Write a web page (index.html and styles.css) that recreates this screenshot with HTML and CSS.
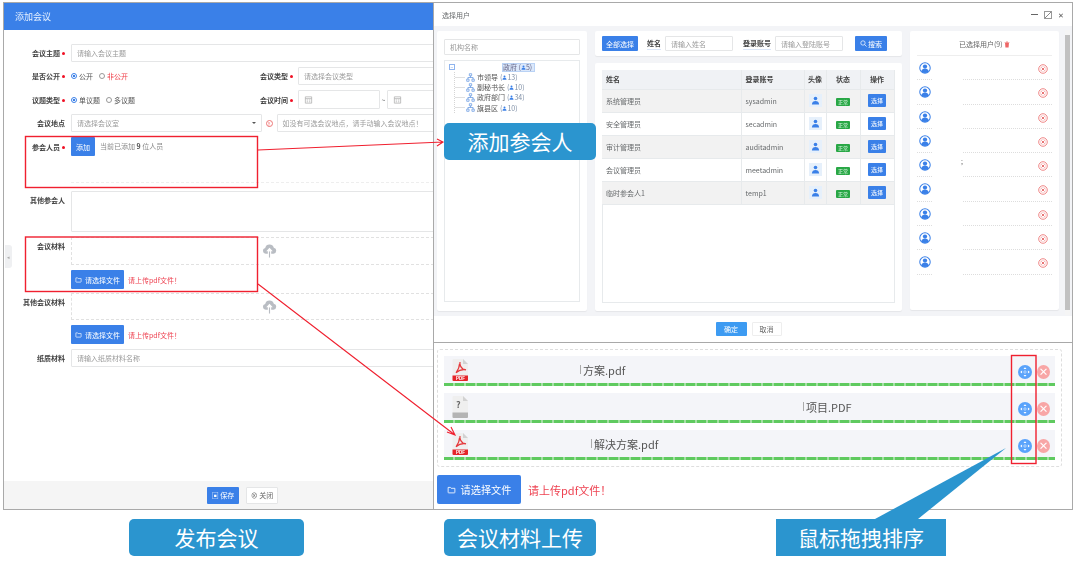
FILE: index.html
```html
<!DOCTYPE html>
<html lang="zh-CN">
<head>
<meta charset="utf-8">
<title>发布会议</title>
<link rel="stylesheet" href="styles.css">
</head>
<body>
<svg class="defs" width="0" height="0" aria-hidden="true">
  <symbol id="i-cloud" viewBox="0 0 16 16"><path fill="#b9bdc3" d="M4 11.5a3.2 3.2 0 0 1-.6-6.3A4.8 4.8 0 0 1 12.6 5a3.3 3.3 0 0 1-.3 6.5H9.8V8.800h1.700L8 5 4.500 8.800h1.700v2.700z"/><path fill="#b9bdc3" d="M7.400 9h1.200v6.500H7.400z"/></symbol>
  <symbol id="i-folder" viewBox="0 0 12 12"><path fill="none" stroke="#fff" stroke-width="1.1" d="M1.500 3.200h3l1 1.200h5v5.400a.7.7 0 0 1-.7.7H2.200a.7.7 0 0 1-.7-.7z"/></symbol>
  <symbol id="i-cal" viewBox="0 0 10 10"><path fill="none" stroke="#aaa" stroke-width=".8" d="M1.500 1.500h7v7h-7zM1.500 3.500h7M3 5h1.500M5.500 5H7M3 7h1.500M5.500 7H7"/></symbol>
  <symbol id="i-person" viewBox="0 0 10 10"><circle cx="5" cy="2.800" r="2" fill="#3a80e8"/><path fill="#3a80e8" d="M1 9.500c0-3 1.800-4 4-4s4 1 4 4z"/></symbol>
  <symbol id="i-user" viewBox="0 0 14 14"><circle cx="7" cy="7" r="6.100" fill="#fff" stroke="#3a80e8" stroke-width="1.2"/><circle cx="7" cy="5.300" r="2.500" fill="#3a80e8"/><path fill="#3a80e8" d="M2.600 11c.6-2.300 2.300-3 4.400-3s3.800.7 4.400 3a6 6 0 0 1-8.800 0z"/></symbol>
  <symbol id="i-del" viewBox="0 0 14 14"><circle cx="7" cy="7" r="6" fill="none" stroke="#ec7373" stroke-width="1.2"/><circle cx="7" cy="7" r="3.800" fill="none" stroke="#f7bcbc" stroke-width=".7"/><path stroke="#e65c5c" stroke-width="1.2" d="M5 5l4 4M9 5l-4 4"/></symbol>
  <symbol id="i-org" viewBox="0 0 10 10"><path fill="none" stroke="#6f9fe4" stroke-width=".9" d="M3.700 .8h2.600v2.300H3.700zM.8 6.800h2.600v2.400H.8zM6.600 6.800h2.600v2.400H6.600zM5 3.100v1.900M2.100 6.800V5h5.800v1.800"/></symbol>
  <symbol id="i-pdf" viewBox="0 0 17 22"><path fill="#efefef" d="M1.500 0H11l5 5v17H1.500a1 1 0 0 1-1-1V1a1 1 0 0 1 1-1z"/><path fill="#d2d2d2" d="M11 0l5 5h-5z"/><path fill="none" stroke="#e5383b" stroke-width="1.2" d="M8 3c-.5 3 .5 5 3 7l3 .8c-3-.5-7 .3-10 3 1.500-2 3.500-6 3.500-9"/><path fill="#e5252a" d="M.5 16.500H16V21a1 1 0 0 1-1 1H1.500a1 1 0 0 1-1-1z"/></symbol>
  <symbol id="i-unknown" viewBox="0 0 17 22"><path fill="#efefef" d="M1.500 0H11l5 5v17H1.500a1 1 0 0 1-1-1V1a1 1 0 0 1 1-1z"/><path fill="#d2d2d2" d="M11 0l5 5h-5z"/><path fill="#b4b4b4" d="M.5 16.500H16V21a1 1 0 0 1-1 1H1.500a1 1 0 0 1-1-1z"/></symbol>
  <symbol id="i-move" viewBox="0 0 14 14"><circle cx="7" cy="7" r="7" fill="#5aa3fb"/><circle cx="7" cy="7" r="1.200" fill="none" stroke="#d4e6ff" stroke-width=".7"/><g fill="#fff"><path d="M7 2.200l1.500 1.900h-3zM7 11.800l1.500-1.900h-3zM2.200 7l1.900-1.500v3zM11.800 7l-1.900-1.500v3z"/></g></symbol>
  <symbol id="i-trash" viewBox="0 0 8 9"><path fill="#ee6666" d="M.7 1.500h6.600v.8H.7zM3 .5h2v1H3zM1.400 2.600h5.200L6.100 8.500H1.900z"/></symbol>
  <symbol id="i-search" viewBox="0 0 8 8"><circle cx="3.400" cy="3.400" r="2.500" fill="none" stroke="#fff" stroke-width=".8"/><path stroke="#fff" stroke-width=".8" d="M5.200 5.200 7.500 7.500"/></symbol>
</svg>

<main class="stage">
  <section class="win win-form">
    <header class="form-title">添加会议</header>
    <span class="side-handle">◂</span>
    <div class="form">
      <div class="row">
        <label class="lbl">会议主题<i class="dot"></i></label>
        <div class="input">请输入会议主题</div>
      </div>
      <div class="row row-split">
        <label class="lbl">是否公开<i class="dot"></i></label>
        <div class="radios"><span class="radio on"></span>公开<span class="radio"></span><em class="red">非公开</em></div>
        <label class="lbl">会议类型<i class="dot"></i></label>
        <div class="input">请选择会议类型</div>
      </div>
      <div class="row row-split row-tall">
        <label class="lbl">议题类型<i class="dot"></i></label>
        <div class="radios"><span class="radio on"></span>单议题<span class="radio"></span>多议题</div>
        <label class="lbl">会议时间<i class="dot"></i></label>
        <div class="dates">
          <div class="input date"><svg class="ic-cal"><use href="#i-cal"/></svg></div>
          <span class="tilde">~</span>
          <div class="input date"><svg class="ic-cal"><use href="#i-cal"/></svg></div>
        </div>
      </div>
      <div class="row">
        <label class="lbl">会议地点</label>
        <div class="input select">请选择会议室<span class="caret"></span></div>
        <span class="hint">↑</span>
        <div class="input grow">如没有可选会议地点，请手动输入会议地点！</div>
      </div>
      <div class="row row-people">
        <label class="lbl">参会人员<i class="dot"></i></label>
        <div class="people"><button class="btn btn-add">添加</button><span class="people-text">当前已添加 <b>9</b> 位人员</span></div>
      </div>
      <div class="row row-area">
        <label class="lbl">其他参会人</label>
        <div class="input area"></div>
      </div>
      <div class="row row-drop">
        <label class="lbl">会议材料</label>
        <div class="drop"><svg class="ic-cloud"><use href="#i-cloud"/></svg></div>
      </div>
      <div class="row row-up">
        <span class="lbl"></span>
        <button class="btn btn-file"><svg class="ic-folder"><use href="#i-folder"/></svg>请选择文件</button>
        <span class="warn">请上传pdf文件！</span>
      </div>
      <div class="row row-drop row-drop2">
        <label class="lbl">其他会议材料</label>
        <div class="drop"><svg class="ic-cloud"><use href="#i-cloud"/></svg></div>
      </div>
      <div class="row row-up">
        <span class="lbl"></span>
        <button class="btn btn-file"><svg class="ic-folder"><use href="#i-folder"/></svg>请选择文件</button>
        <span class="warn">请上传pdf文件！</span>
      </div>
      <div class="row">
        <label class="lbl">纸质材料</label>
        <div class="input">请输入纸质材料名称</div>
      </div>
    </div>
    <footer class="form-foot">
      <button class="btn btn-save">▣ 保存</button>
      <button class="btn btn-close">⊗ 关闭</button>
    </footer>
  </section>

  <section class="win win-user">
    <header class="user-title">
      <span>选择用户</span>
      <span class="ctrls"><i class="c-min"></i><i class="c-max"></i><i class="c-x">✕</i></span>
    </header>
    <div class="user-body">
      <aside class="panel p-tree">
        <div class="input tree-search">机构名称</div>
        <div class="tree">
          <div class="tree-root"><span class="minus">−</span><span class="mask"></span><span class="root-sel">政府 (<svg class="ic-p"><use href="#i-person"/></svg>5)</span></div>
          <ul class="tree-list">
            <li><svg class="ic-org"><use href="#i-org"/></svg>市领导 <small>(<svg class="ic-p"><use href="#i-person"/></svg>13)</small></li>
            <li><svg class="ic-org"><use href="#i-org"/></svg>副秘书长 <small>(<svg class="ic-p"><use href="#i-person"/></svg>10)</small></li>
            <li><svg class="ic-org"><use href="#i-org"/></svg>政府部门 <small>(<svg class="ic-p"><use href="#i-person"/></svg>34)</small></li>
            <li><svg class="ic-org"><use href="#i-org"/></svg>旗县区 <small>(<svg class="ic-p"><use href="#i-person"/></svg>10)</small></li>
          </ul>
        </div>
      </aside>
      <div class="mid">
        <div class="panel p-search">
          <button class="btn btn-all">全部选择</button>
          <b class="s-lbl">姓名</b>
          <div class="input s-in">请输入姓名</div>
          <b class="s-lbl s-lbl2">登录账号</b>
          <div class="input s-in">请输入登陆账号</div>
          <button class="btn btn-search"><svg class="ic-search"><use href="#i-search"/></svg>搜索</button>
        </div>
        <div class="panel p-table">
          <div class="table-box">
            <table>
              <thead><tr><th class="c1">姓名</th><th class="c2">登录账号</th><th class="c3">头像</th><th class="c4">状态</th><th class="c5">操作</th></tr></thead>
              <tbody>
                <tr><td>系统管理员</td><td>sysadmin</td><td><span class="ava"><svg><use href="#i-person"/></svg></span></td><td><span class="tag">正常</span></td><td><button class="btn btn-pick">选择</button></td></tr>
                <tr><td>安全管理员</td><td>secadmin</td><td><span class="ava"><svg><use href="#i-person"/></svg></span></td><td><span class="tag">正常</span></td><td><button class="btn btn-pick">选择</button></td></tr>
                <tr><td>审计管理员</td><td>auditadmin</td><td><span class="ava"><svg><use href="#i-person"/></svg></span></td><td><span class="tag">正常</span></td><td><button class="btn btn-pick">选择</button></td></tr>
                <tr><td>会议管理员</td><td>meetadmin</td><td><span class="ava"><svg><use href="#i-person"/></svg></span></td><td><span class="tag">正常</span></td><td><button class="btn btn-pick">选择</button></td></tr>
                <tr><td>临时参会人1</td><td>temp1</td><td><span class="ava"><svg><use href="#i-person"/></svg></span></td><td><span class="tag">正常</span></td><td><button class="btn btn-pick">选择</button></td></tr>
              </tbody>
            </table>
          </div>
        </div>
      </div>
      <aside class="panel p-chosen">
        <div class="chosen-title">已选择用户(9) <svg class="ic-trash"><use href="#i-trash"/></svg></div>
        <ul class="chosen">
          <li><svg class="ic-user"><use href="#i-user"/></svg><svg class="ic-del"><use href="#i-del"/></svg></li>
          <li><svg class="ic-user"><use href="#i-user"/></svg><svg class="ic-del"><use href="#i-del"/></svg></li>
          <li><svg class="ic-user"><use href="#i-user"/></svg><svg class="ic-del"><use href="#i-del"/></svg></li>
          <li><svg class="ic-user"><use href="#i-user"/></svg><svg class="ic-del"><use href="#i-del"/></svg></li>
          <li><svg class="ic-user"><use href="#i-user"/></svg><span class="cursor">;</span><svg class="ic-del"><use href="#i-del"/></svg></li>
          <li><svg class="ic-user"><use href="#i-user"/></svg><svg class="ic-del"><use href="#i-del"/></svg></li>
          <li><svg class="ic-user"><use href="#i-user"/></svg><svg class="ic-del"><use href="#i-del"/></svg></li>
          <li><svg class="ic-user"><use href="#i-user"/></svg><svg class="ic-del"><use href="#i-del"/></svg></li>
          <li><svg class="ic-user"><use href="#i-user"/></svg><svg class="ic-del"><use href="#i-del"/></svg></li>
        </ul>
      </aside>
      <div class="scroll"><i></i></div>
    </div>
    <footer class="user-foot">
      <button class="btn btn-ok">确定</button>
      <button class="btn btn-cancel">取消</button>
    </footer>
  </section>

  <section class="win win-files">
    <div class="file-box">
      <div class="file">
        <svg class="ic-file"><use href="#i-pdf"/></svg><span class="pdf-mark">PDF</span>
        <span class="fname fname-a">方案.pdf</span>
        <svg class="ic-move"><use href="#i-move"/></svg><span class="remove">×</span>
      </div>
      <div class="file">
        <svg class="ic-file"><use href="#i-unknown"/></svg><b class="qm">?</b>
        <span class="fname fname-b">项目.PDF</span>
        <svg class="ic-move"><use href="#i-move"/></svg><span class="remove">×</span>
      </div>
      <div class="file">
        <svg class="ic-file"><use href="#i-pdf"/></svg><span class="pdf-mark">PDF</span>
        <span class="fname fname-c">解决方案.pdf</span>
        <svg class="ic-move"><use href="#i-move"/></svg><span class="remove">×</span>
      </div>
    </div>
    <div class="file-up">
      <button class="btn btn-big"><svg class="ic-folder-b"><use href="#i-folder"/></svg>请选择文件</button>
      <span class="warn warn-big">请上传pdf文件！</span>
    </div>
  </section>

  <svg class="overlay" viewBox="0 0 1080 563" aria-hidden="true">
    <path fill="#2b95cf" d="M1006 448 875 519h43z"/>
    <g fill="none" stroke="#f0202f" stroke-width="1.100">
      <path d="M258 150 443 142M437 139l6 3-6 4"/>
      <path d="M258 284 455 435M447 432l8 3-4-8"/>
    </g>
    <g fill="none" stroke="#f0202f" stroke-width="1.400">
      <rect x="25.500" y="136.500" width="232" height="51"/>
      <rect x="25.500" y="237" width="232" height="54.500"/>
      <rect x="1011.500" y="355.500" width="24.500" height="108"/>
    </g>
  </svg>

  <div class="tip tip-a">发布会议</div>
  <div class="tip tip-b">添加参会人</div>
  <div class="tip tip-c">会议材料上传</div>
  <div class="tip tip-d">鼠标拖拽排序</div>
</main>
</body>
</html>
```

FILE: styles.css
```css
* { box-sizing: border-box; }
html, body { margin: 0; height: 100%; background: #fff; overflow: hidden; }
body { font-family: "Noto Sans CJK SC", "Liberation Sans", sans-serif; font-size: 7px; color: #676a6c; }
.defs { position: absolute; }
.stage { position: relative; width: 1080px; height: 563px; overflow: hidden; }
button { font: inherit; border: 0; padding: 0; }
ul { list-style: none; margin: 0; padding: 0; }
em { font-style: normal; }

.win { position: absolute; overflow: hidden; background: #fff; border: 1px solid #a9a9a9; filter: blur(.4px); }
.win-form { left: 3px; top: 2px; width: 431px; height: 508px; display: flex; flex-direction: column; }
.win-user { left: 433px; top: 2px; width: 640px; height: 341px; display: flex; flex-direction: column; }
.win-files { left: 433px; top: 342px; width: 640px; height: 168px; padding: 6px 3px 0; }

.btn { display: inline-flex; align-items: center; justify-content: center; background: #3a80e8; color: #fff; border-radius: 1px; }
.input { height: 18px; padding: 0 5px; border: 1px solid #e5e6e7; border-radius: 1px; display: flex; align-items: center; color: #9a9a9a; background: #fff; white-space: nowrap; flex: 1; }

.form-title { height: 27px; flex: none; background: #3a80e8; color: #e6f0ff; font-size: 9px; padding: 0 11px; display: flex; align-items: center; }
.side-handle { position: absolute; left: 1px; top: 242px; width: 7px; height: 23px; background: #eff0f2; border-radius: 0 3px 3px 0; color: #aaa; font-size: 5px; display: flex; align-items: center; justify-content: center; }
.form { flex: 1; width: 490px; padding-top: 14px; display: flex; flex-direction: column; gap: 5px; }
.row { display: flex; gap: 6px; height: 18px; align-items: center; }
.lbl { width: 61px; flex: none; text-align: right; color: #444; font-weight: 700; }
.dot { display: inline-block; width: 3px; height: 3px; border-radius: 50%; background: #f01024; margin-left: 2px; vertical-align: 1px; }
.row-split { display: grid; grid-template-columns: 61px 155px 60px 1fr; }
.row-tall { height: 19px; }
.radios { display: flex; align-items: center; color: #555; }
.radio { width: 6px; height: 6px; border-radius: 50%; border: 1px solid #999; margin: 0 2px 0 6px; background: #fff; }
.radio:first-child { margin-left: 0; }
.radio.on { border-color: #3a80e8; background: radial-gradient(#3a80e8 45%, #fff 55%); }
.red { color: #f0424c; }
.dates { display: flex; align-items: center; height: 100%; }
.date { height: 19px; flex: none; width: 82px; }
.dates .date + .tilde + .date { width: 80px; }
.tilde { width: 7px; text-align: center; }
.ic-cal { width: 9px; height: 10px; }
.select { flex: none; width: 190.5px; position: relative; }
.caret { position: absolute; right: 5px; top: 7px; border: 2.5px solid transparent; border-top-color: #555; }
.hint { width: 7px; height: 7px; flex: none; margin: 0 -2px; border: 1px solid #ee7777; border-radius: 50%; color: #ee5555; font-size: 5px; line-height: 5px; text-align: center; }
.grow { flex: 1; }
.row-people { height: 46px; align-items: flex-start; margin-bottom: 3px; }
.row-people .lbl { padding-top: 5px; }
.people { flex: 1; height: 100%; display: flex; gap: 5px; align-items: flex-start; border-bottom: 1px dashed #eeeeee; color: #8a8a8a; }
.people b { color: #555; }
.people-text { padding-top: 4px; }
.btn-add { width: 24px; height: 19px; }
.row-area { height: 41px; align-items: flex-start; }
.row-area .lbl { padding-top: 4px; }
.area { height: 100%; }
.row-drop { height: 28px; align-items: flex-start; }
.row-drop .lbl { padding-top: 4px; }
.row-drop2 { height: 27px; margin-top: -1px; }
.drop { flex: 1; height: 100%; border: 1px dashed #e1e1e1; border-right: 0; padding-left: 190px; }
.ic-cloud { width: 15px; height: 15px; margin-top: 5px; display: block; }
.row-up { height: 19px; }
.btn-file { width: 53px; height: 19px; gap: 3px; }
.ic-folder { width: 7px; height: 7px; }
.warn { color: #ee4352; margin-left: -2px; }
.form-foot { height: 28px; flex: none; background: #f5f5f5; display: flex; align-items: center; gap: 7px; padding-left: 203px; }
.btn-save { width: 32px; height: 17px; }
.btn-close { width: 32px; height: 17px; background: #fff; color: #666; border: 1px solid #e5e6e7; }

.user-title { height: 23px; flex: none; padding: 0 8px; display: flex; align-items: center; justify-content: space-between; color: #676a6c; }
.ctrls { display: flex; align-items: center; gap: 6px; }
.ctrls i { display: block; font-style: normal; }
.c-min { width: 7px; height: 1.5px; background: #666; }
.c-max { width: 8px; height: 8px; border: 1px solid #999; background: linear-gradient(135deg, transparent 45%, #888 45% 55%, transparent 55%); }
.c-x { color: #555; font-size: 7px; line-height: 8px; width: 6px; }
.user-body { flex: 1; background: #f3f4f7; display: flex; padding: 5px 0 0 3px; gap: 8px; position: relative; height: 289px; }
.panel { background: #fff; border-radius: 2px; box-shadow: 0 1px 1px rgba(0,0,0,.06); }
.p-tree { width: 150px; height: 280px; padding: 8px 7px; }
.tree-search { height: 16px; flex: none; }
.tree { margin-top: 5px; height: 242px; border: 1px solid #e7eaec; padding: 1px 0 0 4px; }
.tree-root { position: relative; height: 10px; display: flex; align-items: center; }
.minus { width: 6px; height: 6px; border: 1px solid #8fb4ee; color: #6f9fe4; font-size: 5px; line-height: 4px; text-align: center; }
.mask { width: 46px; }
.root-sel { margin-left: 1px; background: #dbe8fb; border: 1px solid #b9d2f5; color: #668; height: 9px; display: flex; align-items: center; width: 33px; white-space: nowrap; }
.tree-list { margin-left: 5px; border-left: 1px dotted #d5d5d5; }
.tree-list li { height: 10.2px; display: flex; align-items: center; gap: 1px; color: #555; white-space: nowrap; padding-left: 11px; background: linear-gradient(#e0e0e0, #e0e0e0) 0 50% / 10px 1px no-repeat; }
.tree-list small { font-size: 7px; margin-left: 1px; color: #7f8fa6; }
.ic-org { width: 9px; height: 9px; flex: none; margin-right: 1px; }
.ic-p { width: 5px; height: 5px; }
.mid { width: 307px; display: flex; flex-direction: column; gap: 7px; }
.p-search { height: 25px; padding: 0 7px; display: flex; align-items: center; }
.btn-all { width: 36px; height: 15px; flex: none; }
.s-lbl { margin-left: 9px; margin-right: 4px; color: #444; border-bottom: 1px solid #dbe6f8; line-height: 11px; flex: none; }
.s-lbl2 { margin-left: 10px; }
.s-in { height: 15px; flex: none; width: 68px; }
.btn-search { width: 32px; height: 15px; margin-left: 12px; flex: none; gap: 1px; }
.ic-search { width: 7px; height: 7px; }
.p-table { height: 248px; padding: 7px; }
.table-box { height: 233px; border: 1px solid #e7eaec; border-top: 0; }
table { width: 292px; margin-left: -1px; border-collapse: collapse; table-layout: fixed; }
th { height: 19px; background: #f0f2f5; color: #444; text-align: left; padding: 0 4px; border: 1px solid #e7eaec; border-width: 0 1px 1px 0; white-space: nowrap; }
td { height: 23px; padding: 0 4px; border: 1px solid #e7eaec; border-width: 0 1px 1px 0; }
tbody tr:nth-child(odd) td { background: #f2f2f2; }
tbody tr:nth-child(even) td { background: #fff; }
.c1 { width: 139px; } .c2 { width: 63px; }
th.c3, th.c4, th.c5 { text-align: center; padding: 0; }
.c3 { width: 22px; } .c4 { width: 34px; } .c5 { width: 34px; }
td:nth-child(n+3) { text-align: center; padding: 0; }
.ava { display: inline-flex; width: 13px; height: 13px; background: #e6f0fb; align-items: center; justify-content: center; vertical-align: middle; }
.ava svg { width: 9px; height: 11px; }
.tag { display: inline-block; width: 14px; height: 8px; line-height: 8px; background: #28a745; color: #d8f5e0; font-size: 5px; border-radius: 1px; vertical-align: middle; }
.btn-pick { width: 18px; height: 13px; font-size: 6px; vertical-align: middle; }
.p-chosen { width: 149px; height: 279px; padding: 0 7px; }
.chosen-title { height: 25px; border-bottom: 1px solid #eee; text-align: center; line-height: 27px; color: #666; }
.ic-trash { width: 6px; height: 7px; vertical-align: -1px; }
.chosen li { height: 24.3px; position: relative; display: flex; align-items: flex-start; justify-content: space-between; padding: 6px 4px 0 2px; border-bottom: 1px dotted #ddd; }
.chosen li::after { content: ""; position: absolute; left: 16px; bottom: -1px; width: 29px; height: 2px; background: #fff; }
.ic-user { width: 12px; height: 12px; }
.ic-del { width: 10px; height: 10px; margin-top: 2px; }
.cursor { position: absolute; left: 44px; top: 3px; color: #555; }
.scroll { position: absolute; right: 2px; top: 4px; width: 5px; height: 285px; padding: 5px 0; background: #f5f5f5; }
.scroll i { display: block; height: 100%; background: #c1c1c1; }
.user-foot { height: 26px; flex: none; background: #fff; display: flex; align-items: center; justify-content: center; gap: 5px; padding-right: 9px; }
.btn-ok { width: 31px; height: 14px; background: #3d9bf2; }
.btn-cancel { width: 30px; height: 14px; background: #fff; color: #666; border: 1px solid #eee; }

.file-box { width: 625px; height: 118px; border: 1px dashed #dedede; border-radius: 3px; padding: 6px; display: flex; flex-direction: column; gap: 7px; }
.file { height: 30px; flex: none; position: relative; background: #f4f5f9; display: flex; align-items: center; padding: 0 5px 0 8px; }
.file::after { content: ""; position: absolute; left: 0; right: 0; bottom: 0; height: 3px; background: repeating-linear-gradient(90deg, #5fca5f 0 9px, #a5dfa5 9px 11px); }
.ic-file { width: 17px; height: 22px; flex: none; margin-bottom: 3px; }
.pdf-mark { position: absolute; left: 8px; top: 20px; width: 17px; height: 6px; line-height: 6px; text-align: center; font: 700 4.5px/6px "Liberation Sans", sans-serif; color: #fff; }
.qm { position: absolute; left: 12px; top: 5px; font-size: 9px; color: #666; }
.fname { position: absolute; top: 5px; font-size: 11px; color: #555; white-space: nowrap; height: 18px; line-height: 18px; }
.fname::before { content: ""; position: absolute; left: -3px; top: 4px; width: 1px; height: 9px; background: #aaa; }
.fname-a { left: 139px; }
.fname-b { left: 362px; }
.fname-c { left: 150px; }
.ic-move { margin-left: auto; width: 14px; height: 14px; flex: none; margin-top: 2px; }
.remove { width: 13px; height: 14px; border-radius: 50%; margin: 2px 0 0 5px; background: #f8a6a6; color: #fff; font-size: 10px; line-height: 13px; text-align: center; font-weight: 700; }
.file-up { display: flex; align-items: center; gap: 7px; margin-top: 8px; }
.btn-big { width: 84px; height: 29px; font-size: 10.2px; gap: 5px; border-radius: 2px; }
.ic-folder-b { width: 9px; height: 9px; }
.warn-big { font-size: 11px; margin: 0; }

.overlay { position: absolute; left: 0; top: 0; width: 1080px; height: 563px; pointer-events: none; }

.tip { position: absolute; background: #2b95cf; color: #fff; font-size: 21px; display: flex; align-items: center; justify-content: center; border-radius: 5px; height: 37px; line-height: 1; }
.tip-a { left: 129px; top: 519px; width: 175px; }
.tip-b { left: 444px; top: 123px; width: 152px; }
.tip-c { left: 444px; top: 519px; width: 152px; }
.tip-d { left: 776px; top: 519px; width: 170px; border-radius: 0; }
```
